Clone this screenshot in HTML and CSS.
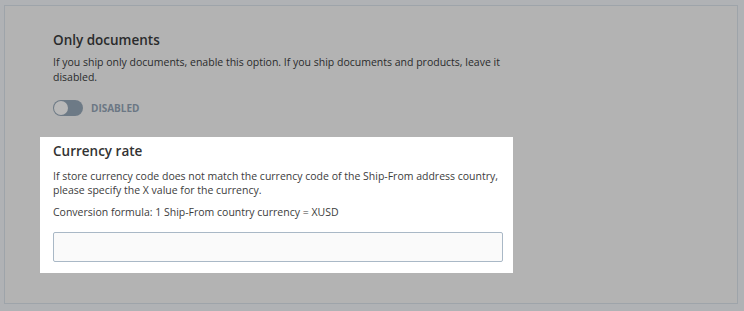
FILE: index.html
```html
<!DOCTYPE html>
<html>
<head>
<meta charset="utf-8">
<link rel="stylesheet" href="styles.css">
</head>
<body>
<div class="card">
  <section class="field dim">
    <h3 class="title">Only documents</h3>
    <p class="desc">If you ship only documents, enable this option. If you ship documents and products, leave it disabled.</p>
    <div class="toggle-row">
      <span class="toggle"><span class="knob"></span></span>
      <span class="toggle-label">DISABLED</span>
    </div>
  </section>
  <section class="field highlight">
    <h3 class="title">Currency rate</h3>
    <p class="desc">If store currency code does not match the currency code of the Ship-From address country, please specify the X value for the currency.</p>
    <p class="desc formula">Conversion formula: 1 Ship-From country currency = XUSD</p>
    <input class="input" type="text">
  </section>
</div>
</body>
</html>
```
FILE: styles.css
```css
html, body {
  margin: 0;
  padding: 0;
}
body {
  background: #b0b2b5;
  font-family: "Open Sans", "DejaVu Sans", sans-serif;
  padding: 5px 6px 7px 4px;
}
.card {
  background: #b3b3b3;
  border: 1px solid #9ea4aa;
  box-sizing: border-box;
  height: 299px;
  padding: 24px 0 0 35px;
}
.field {
  width: 447px;
  padding: 0 13px;
}
.title {
  margin: 0;
  font-size: 13.5px;
  font-weight: 600;
  line-height: 20px;
  color: #2a2b2c;
}
.desc {
  margin: 0;
  font-size: 10.5px;
  line-height: 15px;
  color: #2a2b2c;
}
.dim .title { margin-bottom: 5px; }
.toggle-row {
  display: flex;
  align-items: center;
  gap: 8px;
  margin-top: 15px;
}
.toggle {
  width: 30px;
  height: 16px;
  border-radius: 8px;
  background: #6d7a86;
  box-sizing: border-box;
  padding: 1px;
  display: flex;
}
.knob {
  width: 14px;
  height: 14px;
  border-radius: 50%;
  background: #b8b8b8;
}
.toggle-label {
  font-size: 10px;
  font-weight: 700;
  color: #6b7784;
}
.highlight {
  background: #ffffff;
  margin-top: 21px;
  padding-top: 4px;
  padding-bottom: 11px;
}
.highlight .title { color: #333333; margin-bottom: 8px; }
.highlight .desc { color: #3c3c3c; line-height: 14px; }
.highlight .formula { margin-top: 8px; }
.input {
  display: block;
  margin-top: 13px;
  width: 450px;
  height: 30px;
  box-sizing: border-box;
  border: 1px solid #a9b8c6;
  border-radius: 2px;
  background: #fafafa;
  font: inherit;
}
```
